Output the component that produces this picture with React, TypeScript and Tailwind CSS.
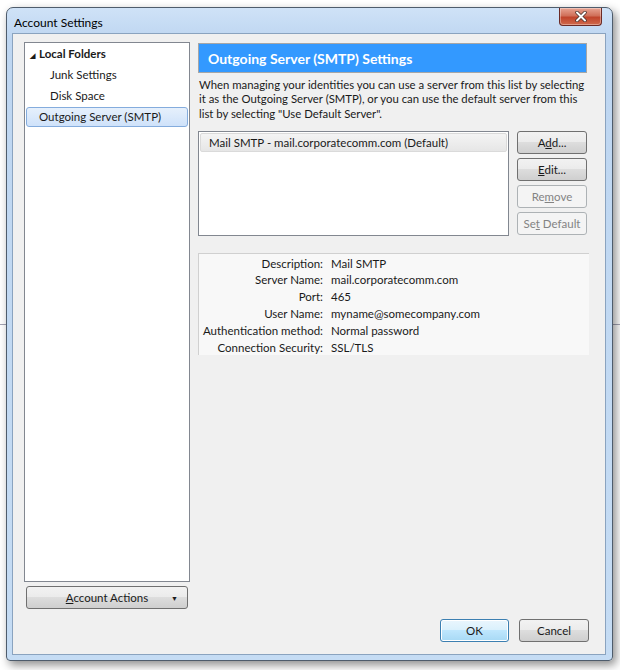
import React from 'react';

const btn =
  'h-[23px] rounded-[3px] border border-[#707070] bg-[linear-gradient(#f2f2f2_0%,#ebebeb_49%,#dddddd_50%,#cfcfcf_100%)] text-[11.5px] text-[#1a1a1a] flex items-center justify-center';
const btnOff =
  'h-[23px] rounded-[3px] border border-[#adb2b5] bg-[#f4f4f4] text-[11.5px] text-[#838383] flex items-center justify-center';

function TreeRow({ children, className }: { children: React.ReactNode; className?: string }) {
  return <div className={'h-[20px] flex items-center whitespace-nowrap ' + (className ?? '')}>{children}</div>;
}

function Detail({ label, value }: { label: string; value: string }) {
  return (
    <div className="flex h-[16.8px] items-center whitespace-nowrap">
      <div className="w-[124px] text-right">{label}</div>
      <div className="ml-[8px]">{value}</div>
    </div>
  );
}

export default function App() {
  return (
    <div className="relative w-[620px] h-[670px] bg-white overflow-hidden font-['Lato','Open_Sans',sans-serif] text-[11.5px] text-[#1a1a1a]">
      {/* desktop line behind the window */}
      <div className="absolute left-0 right-0 top-[324px] h-px bg-[#a4a4b4]" />

      <div className="relative ml-[6px] mt-[7px] w-[607px] h-[654px] rounded-t-[7px] rounded-b-[4px] border border-[#4e5c6c] bg-[linear-gradient(#cfe2f7,#bed6f1_30px,#c5dcf4)] shadow-[3px_4px_10px_rgba(0,0,0,0.45)] flex flex-col">
        {/* title bar */}
        <div className="h-[25px] flex items-start justify-between pl-[7px] pr-[10px]">
          <span className="mt-[6px] text-[12px] text-black">Account Settings</span>
          <div className="w-[43px] h-[18px] rounded-b-[4px] border border-t-0 border-[#6b2a25] bg-[linear-gradient(#e8a493,#d0705a_45%,#c0442c_55%,#d06a4c)] flex items-center justify-center shadow-[inset_0_0_0_1px_rgba(255,255,255,0.35)]">
            <svg width="12" height="11" viewBox="0 0 12 11">
              <path d="M2 1.5 L10 9.5 M10 1.5 L2 9.5" stroke="#3d2b28" strokeWidth="3.4" strokeLinecap="round" />
              <path d="M2 1.5 L10 9.5 M10 1.5 L2 9.5" stroke="#ffffff" strokeWidth="2" strokeLinecap="round" />
            </svg>
          </div>
        </div>

        {/* client area */}
        <div className="ml-[5px] mr-[6px] mb-[5px] flex-1 border border-[#8aa3bf] bg-[#f0f0f0] flex flex-col">
          <div className="flex pl-[11px] pt-[8px]">
            {/* left column */}
            <div className="w-[166px] flex flex-col">
              <div className="h-[540px] border border-[#828790] bg-white px-[1px] pt-[1px]">
                <TreeRow className="pl-[4px] font-bold">
                  <span className="text-[7px] mr-[4px] mt-[2px]">◢</span>Local Folders
                </TreeRow>
                <TreeRow className="pl-[24px] mt-[1px]">Junk Settings</TreeRow>
                <TreeRow className="pl-[24px] mt-[1px]">Disk Space</TreeRow>
                <TreeRow className="pl-[12px] mt-[1px] rounded-[3px] border border-[#84acdd] bg-[linear-gradient(#e6f0fc,#cfe2fa)]">
                  Outgoing Server (SMTP)
                </TreeRow>
              </div>
              <div className={btn + ' mt-[4px] ml-[2px] w-[162px] relative'}>
                <span>
                  <u>A</u>ccount Actions
                </span>
                <span className="absolute right-[9px] top-[6px] text-[7px]">▼</span>
              </div>
            </div>

            {/* right column */}
            <div className="ml-[8px] w-[391px] flex flex-col pt-[1px]">
              <div className="h-[30px] w-[389px] border border-[#a6a6a6] bg-[#3399ff] flex items-center pl-[9px] text-white font-bold text-[14px]">
                Outgoing Server (SMTP) Settings
              </div>
              <p className="mt-[5px] leading-[14.3px] pl-[1px] whitespace-nowrap text-[11.35px]">
                When managing your identities you can use a server from this list by selecting
                <br />
                it as the Outgoing Server (SMTP), or you can use the default server from this
                <br />
                list by selecting "Use Default Server".
              </p>
              <div className="mt-[10px] flex">
                <div className="w-[311px] h-[105px] border border-[#828790] bg-white p-[1px]">
                  <div className="h-[19px] flex items-center pl-[8px] rounded-[2px] border border-[#dadada] bg-[linear-gradient(#f4f4f4,#e6e6e6)] whitespace-nowrap">
                    Mail SMTP - mail.corporatecomm.com (Default)
                  </div>
                </div>
                <div className="ml-[8px] w-[70px] flex flex-col gap-[4px]">
                  <div className={btn}>
                    <span>
                      A<u>d</u>d...
                    </span>
                  </div>
                  <div className={btn}>
                    <span>
                      <u>E</u>dit...
                    </span>
                  </div>
                  <div className={btnOff}>
                    <span>
                      Re<u>m</u>ove
                    </span>
                  </div>
                  <div className={btnOff}>
                    <span className="whitespace-nowrap">
                      Se<u>t</u> Default
                    </span>
                  </div>
                </div>
              </div>
              <div className="mt-[17px] w-[391px] h-[102px] border-t border-l border-[#d0d0d0] bg-[#f8f8f8] pt-[1px]">
                <Detail label="Description:" value="Mail SMTP" />
                <Detail label="Server Name:" value="mail.corporatecomm.com" />
                <Detail label="Port:" value="465" />
                <Detail label="User Name:" value="myname@somecompany.com" />
                <Detail label="Authentication method:" value="Normal password" />
                <Detail label="Connection Security:" value="SSL/TLS" />
              </div>
            </div>
          </div>

          {/* dialog buttons */}
          <div className="mt-auto mb-[12px] flex justify-end gap-[10px] pr-[16px]">
            <div className="w-[69px] h-[23px] rounded-[3px] border border-[#3c7fb1] bg-[linear-gradient(#eaf6fd,#d9f0fc_49%,#bee6fd_50%,#a7d9f5)] shadow-[inset_0_0_0_1px_#ffffff] flex items-center justify-center">
              OK
            </div>
            <div className={btn + ' w-[70px]'}>Cancel</div>
          </div>
        </div>
      </div>
    </div>
  );
}
